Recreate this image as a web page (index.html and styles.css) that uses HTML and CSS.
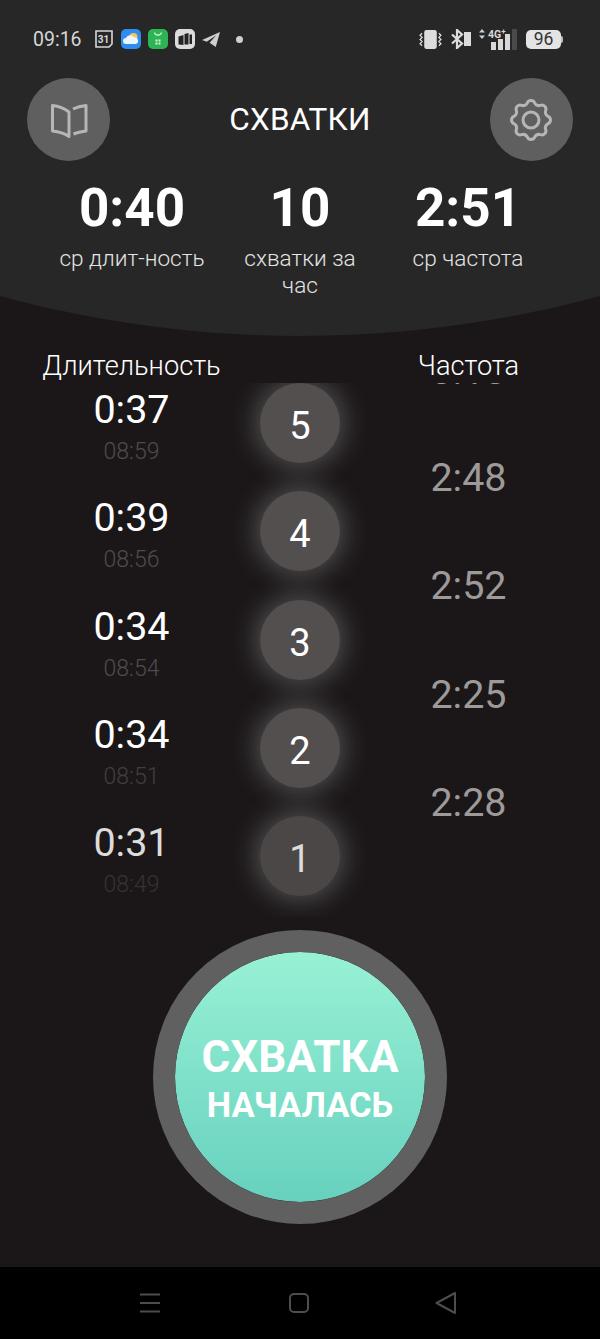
FILE: index.html
```html
<!DOCTYPE html>
<html lang="ru">

<head>
  <meta charset="UTF-8">
  <meta name="viewport" content="width=device-width, initial-scale=1.0">
  <title>Схватки</title>
  <link rel="stylesheet" href="styles.css">
</head>

<body>
  <main class="app">
    <header class="panel">
      <div class="status">
        <span class="clock">09:16</span>
        <div class="status-apps">
          <svg class="ic-cal" viewBox="0 0 20 20"><path d="M2 2h16v13l-3 3H2z" fill="none" stroke="#d8d8d8" stroke-width="1.6"/><text x="9.6" y="13.6" class="ic-cal-num">31</text></svg>
          <svg class="ic-app" viewBox="0 0 20 20"><rect width="20" height="20" rx="5" fill="#2f8df0"/><circle cx="12.5" cy="8" r="4" fill="#f7c65a"/><path d="M5 15a3 3 0 0 1 0-6 4.500 4.500 0 0 1 8-.5 3.300 3.300 0 0 1 1.500 6.500z" fill="#eef6fd"/></svg>
          <svg class="ic-app" viewBox="0 0 20 20"><rect width="20" height="20" rx="5" fill="#2cb455"/><path d="M6.500 3.500c.5 3.500 6.500 3.500 7 0" fill="none" stroke="#d9f5e0" stroke-width="1.200"/><path d="M7.500 10.500h2v2h-2zM10.500 10.500h2v2h-2zM7.500 13.500h2v2h-2zM10.500 13.500h2v2h-2z" fill="#d9f5e0"/></svg>
          <svg class="ic-app" viewBox="0 0 20 20"><rect width="20" height="20" rx="5" fill="#dcdcdc"/><path d="M3.500 7.500l5-1.500v10l-5-.5zM9.500 5l4-1v11.500h-4zM14.500 5.500h2.500v9.500h-2.500z" fill="#232323"/></svg>
          <svg class="ic-tg" viewBox="0 0 20 18"><path d="M19 1L0 9.500l5 1.800L15 4.500 8 12.500l6.500 4.500z" fill="#cfcfcf"/></svg>
          <span class="status-dot"></span>
        </div>
        <div class="status-sys">
          <svg class="ic-vib" viewBox="0 0 22 20"><rect x="5" y="1" width="12" height="18" rx="2" fill="#dcdcdc"/><path d="M3 4l-2 2 2 2-2 2 2 2-2 2 2 2M19 4l2 2-2 2 2 2-2 2 2 2-2 2" fill="none" stroke="#dcdcdc" stroke-width="1.200"/></svg>
          <svg class="ic-bt" viewBox="0 0 21 20"><path d="M2 5.500l10 9-5 4.500V1l5 4.500-10 9" fill="none" stroke="#dcdcdc" stroke-width="2.200"/><rect x="14" y="3" width="7" height="14" fill="#dcdcdc"/></svg>
          <div class="net">
            <svg class="ic-arrows" viewBox="0 0 6 10"><path d="M3 0l3 3.500H0zM3 10l3-3.500H0z" fill="#cfcfcf"/></svg>
            <span class="net-label">4G<sup>+</sup></span>
            <div class="bars">
              <i class="bar bar-1"></i><i class="bar bar-2"></i><i class="bar bar-3"></i><i class="bar bar-4"></i>
            </div>
          </div>
          <div class="battery"><span class="battery-level">96</span></div>
        </div>
      </div>

      <div class="topbar">
        <button class="round-btn">
          <svg viewBox="0 0 38 36" width="38" height="36"><path d="M19 10C14 6 8 4 2.500 3.500V29C8 29.500 14 31 19 34.500Z" fill="none" stroke="#b6b6b6" stroke-width="3" stroke-linejoin="round"/><path d="M23 7C27 5 31 4 36 3.500V29C32 29.500 27 30.500 23.500 32" fill="none" stroke="#b6b6b6" stroke-width="3" stroke-linejoin="round"/></svg>
        </button>
        <h1 class="title">СХВАТКИ</h1>
        <button class="round-btn">
          <svg viewBox="0 0 44 44" width="44" height="44"><circle cx="22" cy="22" r="8" fill="none" stroke="#b6b6b6" stroke-width="3"/><path d="M18.360 4.880A4 4 0 0 1 25.640 4.880A5 5 0 0 0 31.530 7.320A4 4 0 0 1 36.680 12.470A5 5 0 0 0 39.120 18.360A4 4 0 0 1 39.120 25.640A5 5 0 0 0 36.680 31.530A4 4 0 0 1 31.530 36.680A5 5 0 0 0 25.640 39.120A4 4 0 0 1 18.360 39.120A5 5 0 0 0 12.470 36.680A4 4 0 0 1 7.320 31.530A5 5 0 0 0 4.880 25.640A4 4 0 0 1 4.880 18.360A5 5 0 0 0 7.320 12.470A4 4 0 0 1 12.470 7.320A5 5 0 0 0 18.360 4.880Z" fill="none" stroke="#b6b6b6" stroke-width="3"/></svg>
        </button>
      </div>

      <div class="summary">
        <div class="stat">
          <div class="stat-value">0:40</div>
          <div class="stat-label">ср длит-ность</div>
        </div>
        <div class="stat">
          <div class="stat-value">10</div>
          <div class="stat-label">схватки за час</div>
        </div>
        <div class="stat">
          <div class="stat-value">2:51</div>
          <div class="stat-label">ср частота</div>
        </div>
      </div>
    </header>

    <section class="history">
      <div class="history-head">
        <span>Длительность</span>
        <span>Частота</span>
      </div>
      <div class="history-list">
        <div class="row row-top">
          <div class="col-duration"></div>
          <div class="col-num"></div>
          <div class="col-freq">3:13</div>
        </div>
        <div class="row">
          <div class="col-duration"><div class="time">0:37</div><div class="start">08:59</div></div>
          <div class="col-num"><span class="num">5</span></div>
          <div class="col-freq">2:48</div>
        </div>
        <div class="row">
          <div class="col-duration"><div class="time">0:39</div><div class="start">08:56</div></div>
          <div class="col-num"><span class="num">4</span></div>
          <div class="col-freq">2:52</div>
        </div>
        <div class="row">
          <div class="col-duration"><div class="time">0:34</div><div class="start">08:54</div></div>
          <div class="col-num"><span class="num">3</span></div>
          <div class="col-freq">2:25</div>
        </div>
        <div class="row">
          <div class="col-duration"><div class="time">0:34</div><div class="start">08:51</div></div>
          <div class="col-num"><span class="num">2</span></div>
          <div class="col-freq">2:28</div>
        </div>
        <div class="row">
          <div class="col-duration"><div class="time">0:31</div><div class="start">08:49</div></div>
          <div class="col-num"><span class="num">1</span></div>
          <div class="col-freq"></div>
        </div>
      </div>
    </section>

    <div class="action">
      <button class="start-btn">
        <span class="start-big">СХВАТКА</span>
        <span class="start-small">НАЧАЛАСЬ</span>
      </button>
    </div>

    <nav class="navbar">
      <svg viewBox="0 0 20 20" width="20" height="20"><path d="M0 1.500h20M0 10h20M0 18.500h20" stroke="#4d4d4d" stroke-width="2"/></svg>
      <svg class="nav-home" viewBox="0 0 20 20" width="20" height="20"><rect x="1" y="1" width="18" height="18" rx="4" fill="none" stroke="#4d4d4d" stroke-width="2"/></svg>
      <svg viewBox="0 0 22 24" width="22" height="24"><path d="M1.500 12L20 2v20z" fill="none" stroke="#4d4d4d" stroke-width="2" stroke-linejoin="round"/></svg>
    </nav>
  </main>
</body>

</html>
```

FILE: styles.css
```css
html {
  box-sizing: border-box;
  font-family: Roboto, sans-serif;
  font-size: 16px;
}

*,
*::before,
*::after {
  box-sizing: inherit;
}

body {
  margin: 0;
  background-color: #1b1718;
}

.app {
  width: 600px;
  height: 1339px;
  display: flex;
  flex-direction: column;
  overflow: hidden;
  color: #fff;
}

/* top panel, the curve is a part of a big circle */
.panel {
  height: 336px;
  flex-shrink: 0;
  background-color: #272727;
  clip-path: circle(1145px at 50% -809px);
}

.status {
  height: 78px;
  padding: 0 39px 0 33px;
  display: flex;
  align-items: center;
  justify-content: space-between;
}

.clock {
  font-size: 19.500px;
  color: #d6d6d6;
}

.status-apps {
  display: flex;
  align-items: center;
  gap: 7px;
  margin-left: 12px;
  margin-right: auto;
}

.ic-cal {
  width: 20px;
  height: 20px;
}

.ic-cal-num {
  font-family: Roboto, sans-serif;
  font-size: 10px;
  font-weight: 700;
  fill: #d8d8d8;
  text-anchor: middle;
}

.ic-app {
  width: 20px;
  height: 20px;
}

.ic-tg {
  width: 19px;
  height: 17px;
}

.status-dot {
  width: 7px;
  height: 7px;
  margin-left: 8px;
  border-radius: 50%;
  background-color: #d0d0d0;
}

.status-sys {
  display: flex;
  align-items: center;
  gap: 8px;
}

.ic-vib {
  width: 23px;
  height: 21px;
}

.ic-bt {
  width: 21px;
  height: 20px;
}

.net {
  display: flex;
  align-items: flex-end;
  height: 21px;
  position: relative;
  width: 39px;
}

.ic-arrows {
  width: 6px;
  height: 10px;
  align-self: flex-start;
}

.net-label {
  position: absolute;
  left: 9px;
  top: -1px;
  font-size: 10.500px;
  font-weight: 700;
  color: #d8d8d8;
}

.net-label sup {
  font-size: 8px;
  line-height: 0;
}

.bars {
  display: flex;
  align-items: flex-end;
  gap: 2.500px;
  margin-left: 6px;
}

.bar {
  display: block;
  width: 4.500px;
  background-color: #d8d8d8;
}

.bar-1 {
  height: 8px;
}

.bar-2 {
  height: 11px;
}

.bar-3 {
  height: 16px;
}

.bar-4 {
  height: 21px;
  background-color: #4a4a4a;
}

.battery {
  position: relative;
  width: 35px;
  height: 19px;
  border-radius: 5px;
  background-color: #e4e4e4;
  display: flex;
  align-items: center;
  justify-content: center;
}

.battery::after {
  content: "";
  position: absolute;
  right: -2px;
  top: 6px;
  width: 2px;
  height: 7px;
  border-radius: 0 2px 2px 0;
  background-color: #bdbdbd;
}

.battery-level {
  font-size: 17.500px;
  color: #333;
}

.topbar {
  padding: 0 27px;
  display: flex;
  align-items: center;
  justify-content: space-between;
}

.round-btn {
  width: 83px;
  height: 83px;
  border: none;
  padding: 0;
  border-radius: 50%;
  background-color: #5f5f5f;
  display: flex;
  align-items: center;
  justify-content: center;
}

.title {
  margin: 0;
  font-size: 31.500px;
  font-weight: 400;
  letter-spacing: .2px;
}

.summary {
  display: grid;
  grid-template-columns: 200px 136px 200px;
  justify-content: center;
  margin-top: 17px;
  text-align: center;
}

.stat-value {
  font-size: 53px;
  font-weight: 700;
  line-height: 60px;
}

.stat-label {
  margin-top: 7px;
  font-size: 22.600px;
  font-weight: 300;
  line-height: 27px;
  color: #e4e4e4;
}

.history-head {
  display: grid;
  grid-template-columns: 263px 74px 263px;
  padding: 14px 0 1px;
  font-size: 27.200px;
  font-weight: 300;
  line-height: 32px;
  text-align: center;
}

.history-head span:last-child {
  grid-column: 3;
}

.history-list {
  height: 534px;
  overflow: hidden;
}

.row {
  display: grid;
  grid-template-columns: 263px 74px 263px;
  height: 108.300px;
}

.row-top {
  height: 0;
}

.col-duration {
  text-align: center;
}

.time {
  font-size: 39.500px;
  line-height: 54px;
}

.start {
  margin-top: 1px;
  font-size: 23px;
  font-weight: 300;
  line-height: 28px;
  color: #4f4b4c;
}

.col-num {
  display: flex;
  justify-content: center;
}

.num {
  flex-shrink: 0;
  width: 80px;
  height: 80px;
  padding-top: 6px;
  border-radius: 50%;
  background-color: #544f4f;
  box-shadow: 0 0 26px 5px rgba(170, 170, 170, .38);
  display: flex;
  align-items: center;
  justify-content: center;
  font-size: 38px;
}

.col-freq {
  text-align: center;
  font-size: 39.500px;
  line-height: 54px;
  padding-top: 68px;
  color: #9e9a9a;
}

/* only the bottom edge of this one shows above the list */
.row-top .col-freq {
  transform: translateY(-107.500px);
}

.row:nth-child(6) .time {
  color: #dcdcdc;
}

.row:nth-child(6) .start {
  color: #363233;
}

.row:nth-child(6) .num {
  background-color: #4b4747;
  color: #dcdcdc;
}

.row:nth-child(5) .start {
  color: #423e3f;
}

.action {
  display: flex;
  justify-content: center;
  margin-top: 13px;
}

.start-btn {
  width: 294px;
  height: 294px;
  flex-shrink: 0;
  padding: 4px 0 0;
  border: 22px solid #606060;
  border-radius: 50%;
  background: linear-gradient(#98f1d5, #67d1be);
  background-clip: padding-box;
  display: flex;
  flex-direction: column;
  align-items: center;
  justify-content: center;
  color: #fff;
  font-family: Roboto, sans-serif;
  font-weight: 700;
}

.start-big {
  font-size: 44px;
  line-height: 52px;
}

.start-small {
  font-size: 34.500px;
  line-height: 44px;
}

.navbar {
  margin-top: auto;
  height: 72px;
  flex-shrink: 0;
  background-color: #000;
  display: flex;
  align-items: center;
  padding-left: 140px;
}

.nav-home {
  margin: 0 126px 0 129px;
}
```
